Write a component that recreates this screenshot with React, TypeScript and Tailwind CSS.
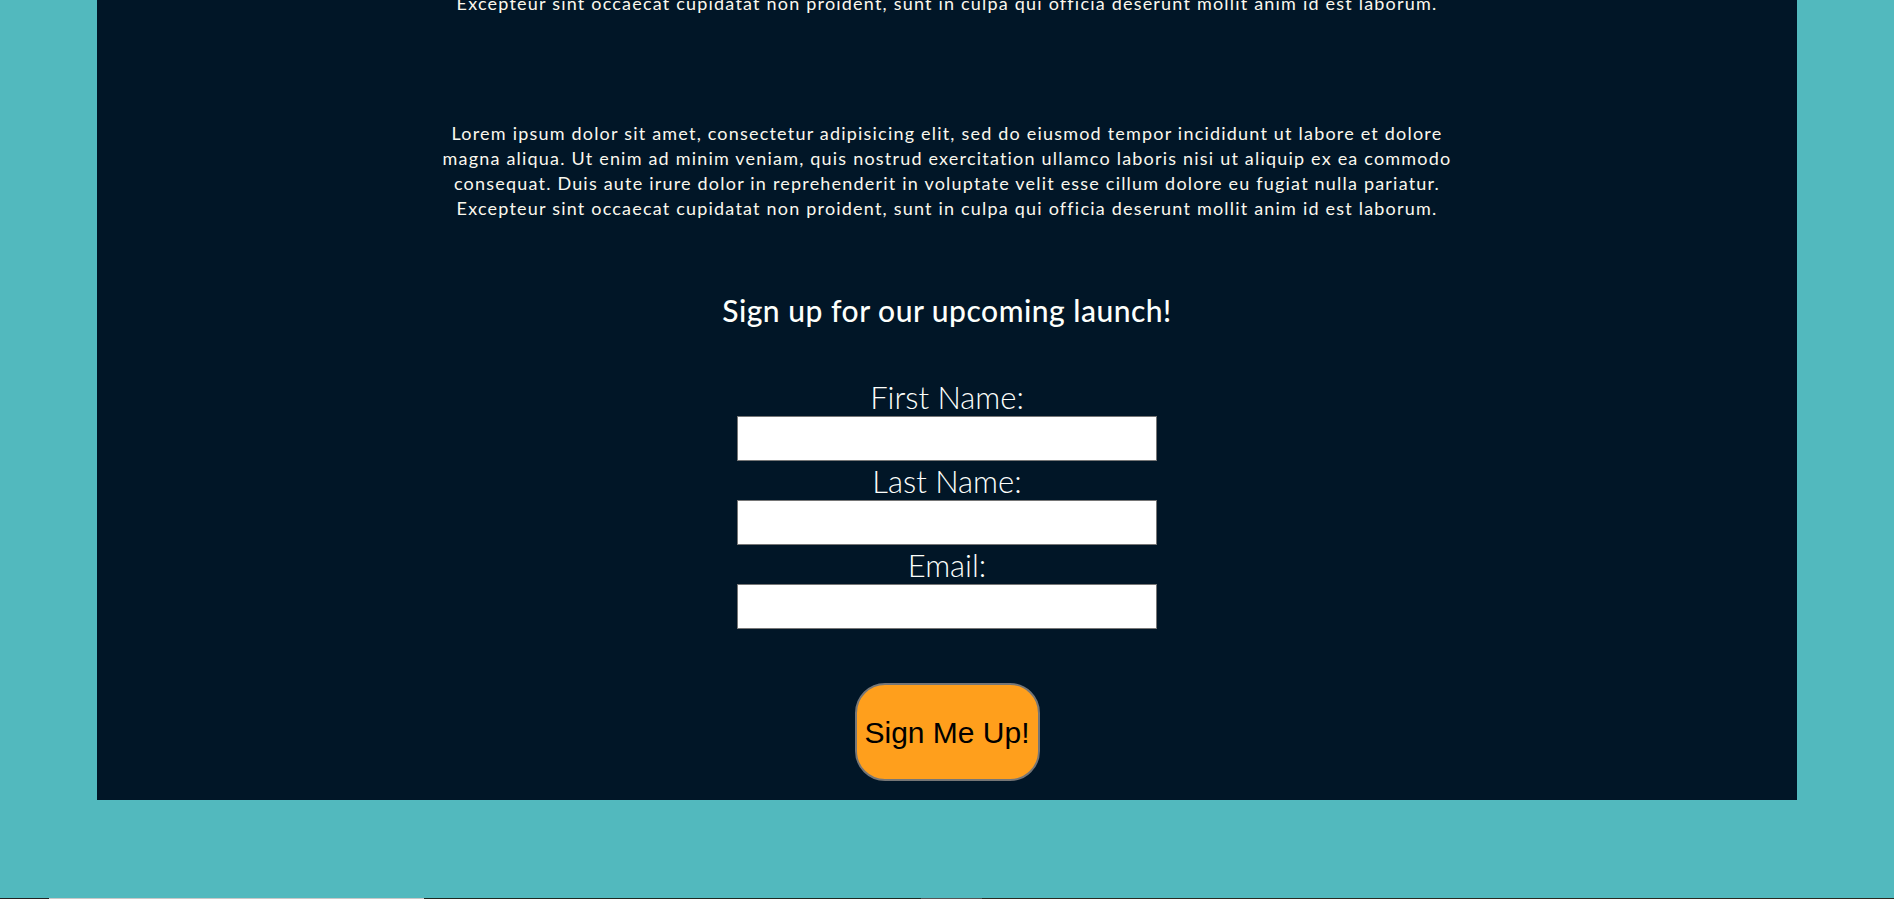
const lorem =
  'Lorem ipsum dolor sit amet, consectetur adipisicing elit, sed do eiusmod tempor incididunt ut labore et dolore magna aliqua. Ut enim ad minim veniam, quis nostrud exercitation ullamco laboris nisi ut aliquip ex ea commodo consequat. Duis aute irure dolor in reprehenderit in voluptate velit esse cillum dolore eu fugiat nulla pariatur. Excepteur sint occaecat cupidatat non proident, sunt in culpa qui officia deserunt mollit anim id est laborum.'

const fields = [
  { id: 'first', label: 'First Name:', type: 'text' },
  { id: 'last', label: 'Last Name:', type: 'text' },
  { id: 'email', label: 'Email:', type: 'email' },
]

export default function App() {
  return (
    <div className="flex h-[899px] flex-col overflow-hidden bg-[#52b9be] font-['Lato',sans-serif]">
      <main className="mx-[97px] flex flex-col items-center bg-[#011627] pb-[19px] text-center">
        {/* previous section, scrolled mostly out of view */}
        <p className="-mt-[84px] w-[1022px] text-[18px] leading-[25px] tracking-[1.2px] text-[#fbf8ee]">{lorem}</p>

        <p className="mt-[105px] w-[1022px] text-[18px] leading-[25px] tracking-[1.2px] text-[#fbf8ee]">{lorem}</p>

        <h2 className="mt-[70px] text-[30px] font-medium leading-[38px] tracking-[0.5px] text-[#fdfffc]">
          Sign up for our upcoming launch!
        </h2>

        <form className="mt-[48px] flex flex-col items-center">
          {fields.map((f) => (
            <div key={f.id} className="flex flex-col items-center">
              <label htmlFor={f.id} className="h-[39px] text-[31px] font-light leading-[41px] text-[#fdfffc]">
                {f.label}
              </label>
              <input
                id={f.id}
                type={f.type}
                className="h-[45px] w-[420px] border border-[#767676] bg-white px-2 text-black"
              />
            </div>
          ))}
          <button
            type="submit"
            className="mt-[54px] h-[98px] w-[185px] rounded-[30px] border-2 border-[#767676] bg-[#ff9f1c] font-['Liberation_Sans',Arial,sans-serif] text-[30px] text-black"
          >
            Sign Me Up!
          </button>
        </form>
      </main>
      <div className="flex-1" />
      <div className="flex h-px">
        <div className="w-[49px] bg-[#222222]" />
        <div className="w-[375px] bg-[#c8c8c8]" />
        <div className="w-[497px] bg-[#1e2a22]" />
        <div className="w-[61px] bg-[#555555]" />
        <div className="flex-1 bg-[#2a2b22]" />
      </div>
    </div>
  )
}
